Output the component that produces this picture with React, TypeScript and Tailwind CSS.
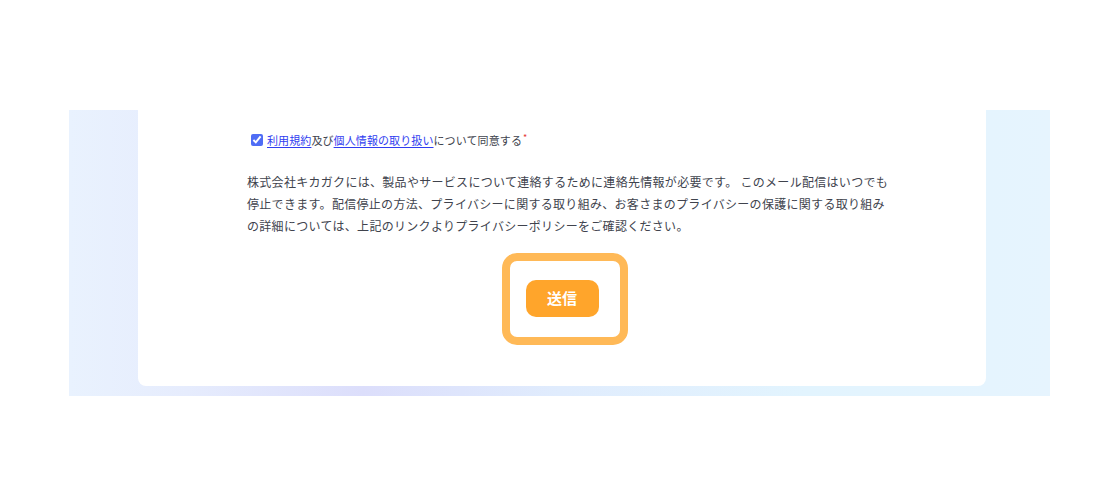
import { useState } from 'react';

export default function App() {
  const [agreed, setAgreed] = useState(true);

  return (
    <div className="min-h-[502px] w-full bg-white pt-[110px] font-['Noto_Sans_CJK_JP','Noto_Sans',sans-serif]">
      {/* Background band */}
      <div className="ml-[69px] mr-[58px] bg-[linear-gradient(90deg,#e9f2fe_0%,#e6ecfd_12%,#dcdefb_30%,#e0ecfd_50%,#e2f4fe_75%,#e6f4fe_100%)] pl-[69px] pr-[64px] pb-[10px]">
        <div className="rounded-b-lg bg-white pt-[23px] pb-[69px] pl-[109px]">
          {/* Consent */}
          <label className="flex h-[14px] items-center text-[11px] leading-[14px] tracking-[0.1px] text-[#40434d]">
            <input
              type="checkbox"
              checked={agreed}
              onChange={(e: React.ChangeEvent<HTMLInputElement>) => setAgreed(e.target.checked)}
              className="ml-[4px] mr-[4px] h-[12px] w-[12px] accent-[#4f6df5]"
            />
            <a href="#" className="text-[#2f3df0] underline underline-offset-2">利用規約</a>
            <span>及び</span>
            <a href="#" className="text-[#2f3df0] underline underline-offset-2">個人情報の取り扱い</a>
            <span>について同意する</span>
            <span className="ml-[1px] -mt-[4px] text-[9px] text-[#e53935]">*</span>
          </label>

          {/* Notice */}
          <p className="mt-[24px] w-[645px] text-[12px] leading-[22px] tracking-[0.3px] text-[#40434d]">
            株式会社キカガクには、製品やサービスについて連絡するために連絡先情報が必要です。 このメール配信はいつでも停止できます。配信停止の方法、プライバシーに関する取り組み、お客さまのプライバシーの保護に関する取り組みの詳細については、上記のリンクよりプライバシーポリシーをご確認ください。
          </p>

          {/* Submit */}
          <div className="mt-[43px] flex w-[630px] justify-center">
            <button className="relative h-[37px] w-[73px] rounded-[10px] bg-[#ffa52b] text-[15px] font-bold text-white">
              <span className="pointer-events-none absolute -top-[27px] -left-[24px] h-[92px] w-[126px] rounded-[15px] border-[8px] border-[#ffb957]" />
              送信
            </button>
          </div>
        </div>
      </div>
    </div>
  );
}
